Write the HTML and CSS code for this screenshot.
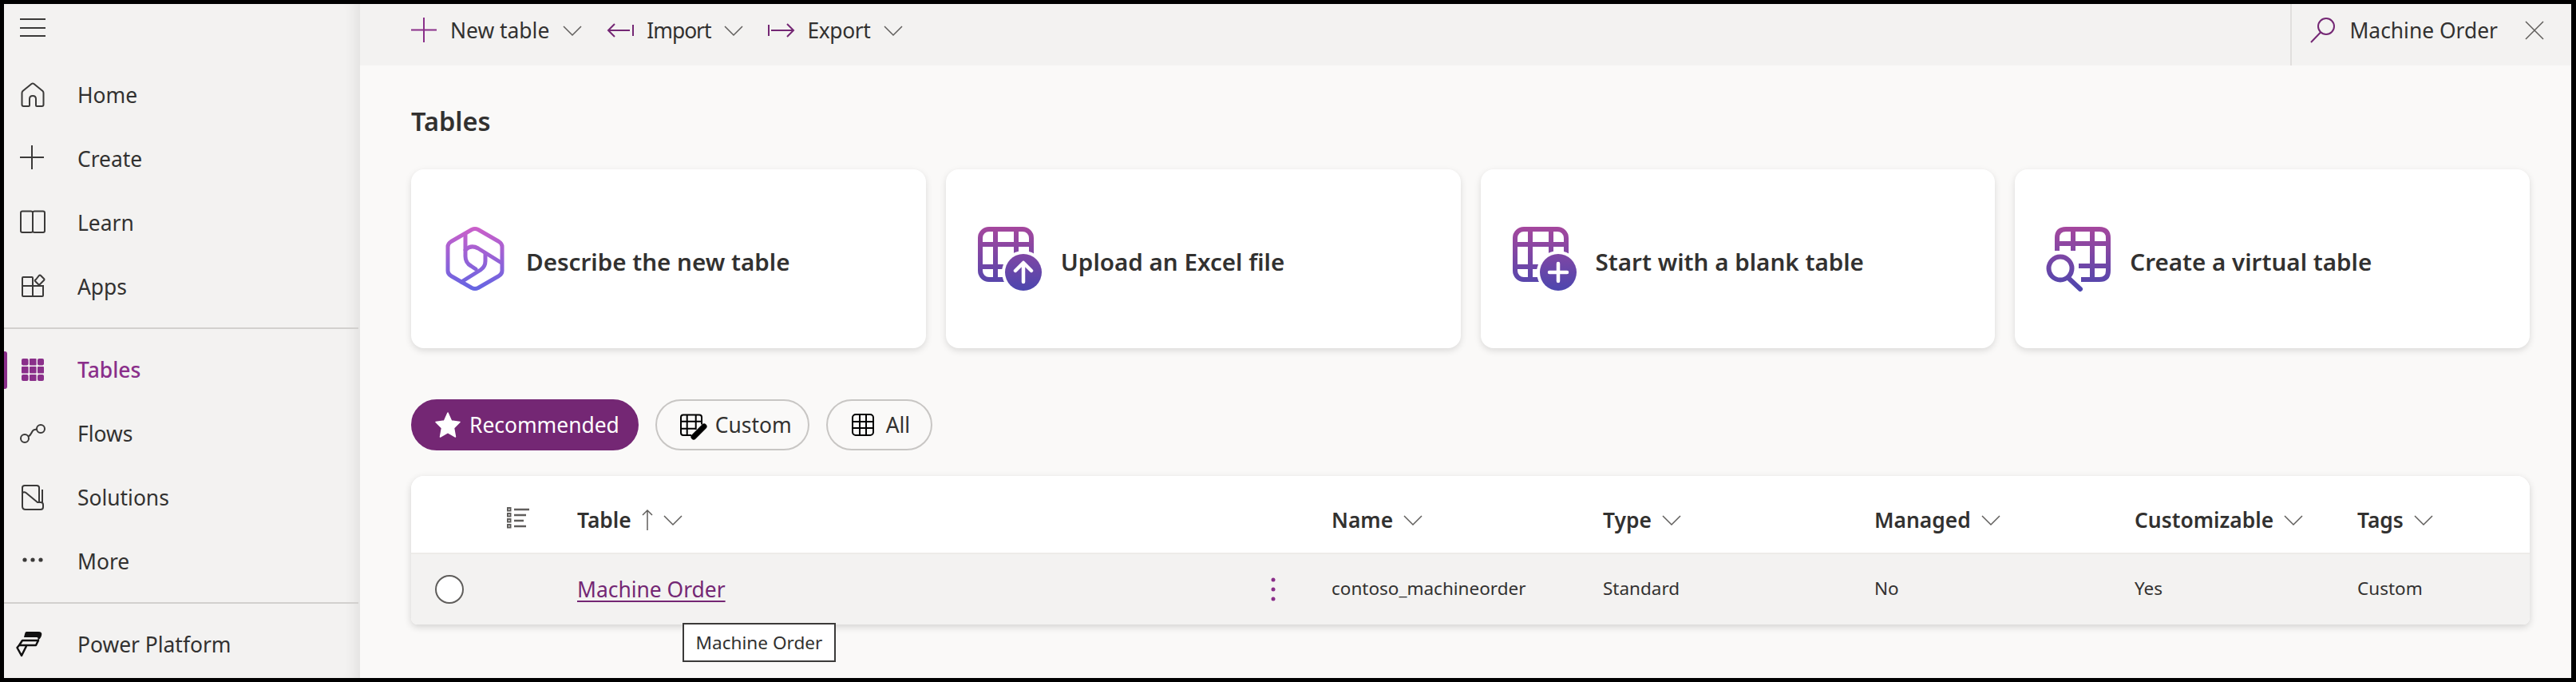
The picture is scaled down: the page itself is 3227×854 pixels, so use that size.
FILE: index.html
```html
<!DOCTYPE html>
<html lang="en">
<head>
<meta charset="utf-8">
<title>Tables</title>
<link rel="stylesheet" href="styles.css">
</head>
<body>
<div class="app">
  <aside class="sidebar">
    <div class="hamburger"><svg class="ico" width="32" height="24" viewBox="0 0 32 24"><path d="M0 1H32M0 12H32M0 22H32"/></svg></div>
    <nav class="nav">
      <a class="nav-item"><svg class="ico" width="32" height="32" viewBox="0 0 32 32"><path d="M2.5 13.5Q2.5 12 3.5 11L14.5 2Q16 1 17.5 2L28.5 11Q29.5 12 29.5 13.5V28Q29.5 30 27.5 30H21Q20 30 20 29V21Q20 17 16 17T12 21V29Q12 30 11 30H4.5Q2.5 30 2.5 28Z"/></svg><span>Home</span></a>
      <a class="nav-item"><svg class="ico" width="32" height="32" viewBox="0 0 32 32"><path d="M15 -1V29M0 14H30"/></svg><span>Create</span></a>
      <a class="nav-item"><svg class="ico" width="32" height="32" viewBox="0 0 32 32"><path d="M3 1.5H14Q15.5 1.5 16 3Q16.5 1.5 18 1.5H29Q31 1.5 31 3.5V26Q31 28 29 28H18Q16.5 28 16 26.5Q15.5 28 14 28H3Q1 28 1 26V3.5Q1 1.5 3 1.5ZM16 3V26.5"/></svg><span>Learn</span></a>
      <a class="nav-item"><svg class="ico" width="32" height="32" viewBox="0 0 32 32"><path d="M16 15H4Q3 15 3 14M3 14V5Q3 4 4 4H15Q16 4 16 5V28M3 14V27Q3 28 4 28H28Q29 28 29 27V15H16M20 7L24 2Q25 1 26 2L30 6Q31 7 30 8L25 13Q24 14 23 13L19 9Q18 8 20 7Z"/></svg><span>Apps</span></a>
    </nav>
    <div class="nav-rule"></div>
    <nav class="nav">
      <a class="nav-item is-active"><svg class="ico-fill" width="32" height="32" viewBox="0 0 32 32"><rect x="2" y="2" width="8.6" height="8.6" rx="2"/><rect x="12" y="2" width="8.6" height="8.6" rx="1"/><rect x="22" y="2" width="8" height="8.6" rx="2"/><rect x="2" y="12" width="8.6" height="8.6" rx="1"/><rect x="12" y="12" width="8.6" height="8.6" rx="1"/><rect x="22" y="12" width="8" height="8.6" rx="1"/><rect x="2" y="22" width="8.6" height="8" rx="2"/><rect x="12" y="22" width="8.6" height="8" rx="1"/><rect x="22" y="22" width="8" height="8" rx="2"/></svg><span>Tables</span></a>
      <a class="nav-item"><svg class="ico" width="32" height="32" viewBox="0 0 32 32"><circle cx="6" cy="22" r="5"/><circle cx="26" cy="10" r="5"/><path d="M10.5 19.5C14 18 14.5 14 16 12.5C17 11 19 11 21 10.5"/></svg><span>Flows</span></a>
      <a class="nav-item"><svg class="ico" width="32" height="32" viewBox="0 0 32 32"><path d="M3 12V3.5Q3 1 6 1H21Q24 1 24 3.5V22M3 12V27Q3 31 7 31H26Q29 31 29 28V25Q29 22 26 22H22L7.5 10Q6 9 4 9.5L3 10M28 6V22"/></svg><span>Solutions</span></a>
      <a class="nav-item"><svg class="ico-dots" width="32" height="32" viewBox="0 0 32 32"><circle cx="6" cy="14" r="2.6"/><circle cx="16" cy="14" r="2.6"/><circle cx="26" cy="14" r="2.6"/></svg><span>More</span></a>
    </nav>
    <div class="nav-rule nav-rule-low"></div>
    <a class="nav-item"><svg class="ico-logo" width="32" height="32" viewBox="0 0 32 32"><path class="logo-solid" d="M12 0H27Q32.500 0 31 5Q29.500 9.500 26 11Q27.500 7 25 7H9L10 3Q10.500 0 12 0Z"/><path class="logo-line" d="M7 11H27L24 17H3ZM3 17L0.500 20L6 30L12 18"/></svg><span>Power Platform</span></a>
  </aside>

  <main class="main">
    <header class="toolbar">
      <button class="tb-btn tb-new"><svg class="ico-brand" width="32" height="32" viewBox="0 0 32 32"><path d="M16 0V31M0 15.500H32"/></svg><span>New table</span><svg class="chev" width="24" height="13" viewBox="0 0 24 13"><path d="M1 1L12 12L23 1"/></svg></button>
      <button class="tb-btn tb-import"><svg class="ico-brand2" width="33" height="32" viewBox="0 0 33 32"><path d="M32 9V23M1 16H28M9 8L1 16L9 24"/></svg><span>Import</span><svg class="chev" width="24" height="13" viewBox="0 0 24 13"><path d="M1 1L12 12L23 1"/></svg></button>
      <button class="tb-btn tb-export"><svg class="ico-brand2" width="33" height="32" viewBox="0 0 33 32"><path d="M1 9V23M4 16H32M24 8L32 16L24 24"/></svg><span>Export</span><svg class="chev" width="24" height="13" viewBox="0 0 24 13"><path d="M1 1L12 12L23 1"/></svg></button>
      <div class="tb-search">
        <svg class="ico-brand2" width="32" height="32" viewBox="0 0 32 32"><circle cx="20" cy="11" r="10"/><path d="M13 18.500L1 31"/></svg>
        <span>Machine Order</span>
        <svg class="ico-close" width="24" height="24" viewBox="0 0 24 24"><path d="M1 1L23 23M23 1L1 23"/></svg>
      </div>
    </header>

    <section class="content">
      <h1 class="title">Tables</h1>

      <div class="cards">
        <a class="card">
          <svg class="card-ico" width="80" height="80" viewBox="0 0 80 80"><defs><linearGradient id="gCop" gradientUnits="userSpaceOnUse" x1="0" y1="0" x2="0" y2="80"><stop offset="0" stop-color="#cc5fc9"/><stop offset="1" stop-color="#6365e3"/></linearGradient></defs><g fill="none" stroke="url(#gCop)" stroke-width="5" stroke-linejoin="round" stroke-linecap="round"><path d="M44 3.500Q40 1.500 36 3.500L10 18.500Q6 21 6 25V55Q6 59 10 61.500L36 76.500Q40 78.500 44 76.500L70 61.500Q74 59 74 55V25Q74 21 70 18.500Z"/><path d="M28 10V37Q28 45 35 49L41 53"/><path d="M28 29Q35 22 44 27L73 45"/><path d="M53 33V43Q53 50 47 54L23 69"/></g></svg>
          <span>Describe the new table</span>
        </a>
        <a class="card">
          <svg class="card-ico" width="80" height="80" viewBox="0 0 80 80"><defs><linearGradient id="gUp" gradientUnits="userSpaceOnUse" x1="0" y1="0" x2="0" y2="80"><stop offset="0" stop-color="#a5479d"/><stop offset="1" stop-color="#4c46ae"/></linearGradient></defs><g fill="none" stroke="url(#gUp)" stroke-width="6"><rect x="3" y="3" width="64" height="63" rx="11"/><path d="M22 3V66M48 3V66M3 22H67M3 50H67"/></g><circle cx="57" cy="57" r="27" fill="#fff"/><circle cx="57" cy="57" r="23" fill="url(#gUp)"/><path class="glyph" d="M57 69V46M47 55L57 45L67 55"/></svg>
          <span>Upload an Excel file</span>
        </a>
        <a class="card">
          <svg class="card-ico" width="80" height="80" viewBox="0 0 80 80"><defs><linearGradient id="gAdd" gradientUnits="userSpaceOnUse" x1="0" y1="0" x2="0" y2="80"><stop offset="0" stop-color="#a5479d"/><stop offset="1" stop-color="#4c46ae"/></linearGradient></defs><g fill="none" stroke="url(#gAdd)" stroke-width="6"><rect x="3" y="3" width="64" height="63" rx="11"/><path d="M22 3V66M48 3V66M3 22H67M3 50H67"/></g><circle cx="57" cy="57" r="27" fill="#fff"/><circle cx="57" cy="57" r="23" fill="url(#gAdd)"/><path class="glyph" d="M57 46V68M46 57H68"/></svg>
          <span>Start with a blank table</span>
        </a>
        <a class="card">
          <svg class="card-ico" width="80" height="80" viewBox="0 0 80 80"><defs><linearGradient id="gVir" gradientUnits="userSpaceOnUse" x1="0" y1="0" x2="0" y2="80"><stop offset="0" stop-color="#a5479d"/><stop offset="1" stop-color="#4c46ae"/></linearGradient></defs><g fill="none" stroke="url(#gVir)" stroke-width="6"><path d="M13 30V14Q13 3 24 3H66Q77 3 77 14V55Q77 66 66 66H43"/><path d="M33 3V30M57 3V66M13 21H77M40 49H77"/><circle cx="17" cy="52" r="14.500"/><path d="M27 64L42 78" stroke-linecap="round"/></g></svg>
          <span>Create a virtual table</span>
        </a>
      </div>

      <div class="pills">
        <button class="pill pill-on pill-rec"><svg width="32" height="32" viewBox="0 0 32 32"><path class="star" d="M16 1L20.500 11L31 12.500L23.500 20L25.500 31L16 25.500L6.500 31L8.500 20L1 12.500L11.500 11Z"/></svg><span>Recommended</span></button>
        <button class="pill pill-cus"><svg class="ico-black" width="34" height="32" viewBox="0 0 34 32"><path d="M15 29H5Q2 29 2 26V6.500Q2 3.500 5 3.500H25Q28 3.500 28 6.500V15.500M9.700 3.500V29M20.700 3.500V22M2 11.700H28M2 20.700H21"/><path class="pen" d="M31 18L18 31"/></svg><span>Custom</span></button>
        <button class="pill pill-all"><svg class="ico-black" width="28" height="28" viewBox="0 0 28 28"><rect x="1" y="1" width="26" height="26" rx="4"/><path d="M10 1V27M18 1V27M1 10H27M1 18H27"/></svg><span>All</span></button>
      </div>

      <div class="table-card">
        <div class="thead">
          <div class="cell"></div>
          <div class="cell"><svg class="ico-list" width="28" height="28" viewBox="0 0 28 28"><rect x="1" y="-1" width="3.500" height="3.500"/><rect x="1" y="6" width="3.500" height="3.500"/><rect x="1" y="13" width="3.500" height="3.500"/><rect x="1" y="20" width="3.500" height="3.500"/><path d="M9 1H28M9 8H24M9 15H21M9 22H24"/></svg></div>
          <div class="cell th"><span>Table</span><svg class="sort" width="14" height="26" viewBox="0 0 14 26"><path d="M7 26V1M1 7L7 1L13 7"/></svg><svg class="chev" width="24" height="13" viewBox="0 0 24 13"><path d="M1 1L12 12L23 1"/></svg></div>
          <div class="cell th"><span>Name</span><svg class="chev" width="24" height="13" viewBox="0 0 24 13"><path d="M1 1L12 12L23 1"/></svg></div>
          <div class="cell th"><span>Type</span><svg class="chev" width="24" height="13" viewBox="0 0 24 13"><path d="M1 1L12 12L23 1"/></svg></div>
          <div class="cell th"><span>Managed</span><svg class="chev" width="24" height="13" viewBox="0 0 24 13"><path d="M1 1L12 12L23 1"/></svg></div>
          <div class="cell th"><span>Customizable</span><svg class="chev" width="24" height="13" viewBox="0 0 24 13"><path d="M1 1L12 12L23 1"/></svg></div>
          <div class="cell th"><span>Tags</span><svg class="chev" width="24" height="13" viewBox="0 0 24 13"><path d="M1 1L12 12L23 1"/></svg></div>
        </div>
        <div class="trow">
          <div class="cell cell-radio"><span class="radio"></span></div>
          <div class="cell"></div>
          <div class="cell cell-link"><a class="link">Machine Order</a><svg class="kebab" width="6" height="30" viewBox="0 0 6 30"><circle cx="3" cy="3" r="2.500"/><circle cx="3" cy="15" r="2.500"/><circle cx="3" cy="27" r="2.500"/></svg></div>
          <div class="cell td">contoso_machineorder</div>
          <div class="cell td">Standard</div>
          <div class="cell td">No</div>
          <div class="cell td">Yes</div>
          <div class="cell td">Custom</div>
        </div>
        <div class="tooltip">Machine Order</div>
      </div>
    </section>
  </main>
</div>
</body>
</html>
```

FILE: styles.css
```css
* { box-sizing: border-box; }
html, body { margin: 0; padding: 0; }
body { font-family: "Noto Sans", "Open Sans", sans-serif; color: #323130; background: #000; }
svg { display: block; flex: none; overflow: visible; }
.app { width: 3227px; height: 854px; display: flex; border: solid #000; border-width: 5px 6px 5px 5px; background: #faf9f8; overflow: hidden; }

/* sidebar */
.sidebar { width: 446px; flex: none; background: #f3f2f1; box-shadow: inset -16px 0 16px -10px rgba(0,0,0,.07); display: flex; flex-direction: column; }
.hamburger { height: 74px; padding: 18px 0 0 20px; }
.nav { display: flex; flex-direction: column; }
.nav-item { height: 80px; display: flex; align-items: center; gap: 40px; padding-left: 20px; font-size: 26.4px; position: relative; }
.nav-rule { height: 2px; width: 444px; background: #d2d0ce; margin: 11px 0 11px; flex: none; }
.nav-rule-low { margin: 11px 0 11px; }
.ico path, .ico circle { fill: none; stroke: #3b3a39; stroke-width: 2; }
.ico-fill { fill: #8a2f8a; }
.ico-dots { fill: #3b3a39; }
.ico-logo { margin-left: -4px; margin-right: 4px; }
.logo-solid { fill: #111; }
.logo-line { fill: none; stroke: #111; stroke-width: 2.500; stroke-linejoin: round; }
.is-active { color: #8a2f8a; font-weight: 500; }
.is-active::before { content: ""; position: absolute; left: 0; top: 17px; width: 4px; height: 47px; background: #8a2f8a; border-radius: 0 3px 3px 0; }

/* toolbar */
.toolbar { height: 77px; flex: none; background: #f3f2f1; display: flex; align-items: center; padding-left: 64px; font-size: 26.4px; }
.tb-btn { display: flex; align-items: center; gap: 17px; border: 0; background: none; padding: 0; margin: 0 32px 11px 0; font: inherit; color: inherit; }
.tb-import { gap: 16px; margin-right: 31px; }
.tb-import > span { letter-spacing: -1px; }
.tb-export > span { letter-spacing: -.4px; }
.ico-brand path { fill: none; stroke: #8a2f8a; stroke-width: 2; }
.ico-brand2 path, .ico-brand2 circle { fill: none; stroke: #742774; stroke-width: 2; }
.chev path { fill: none; stroke: #605e5c; stroke-width: 1.500; }
.tb-search { margin-left: auto; height: 77px; border-left: 2px solid #e1dfdd; display: flex; align-items: center; padding: 0 34px 11px 23px; gap: 17px; }
.tb-search > span { margin-right: 17px; }
.ico-close path { fill: none; stroke: #605e5c; stroke-width: 1.500; }

/* content */
.main { flex: 1; min-width: 0; display: flex; flex-direction: column; }
.content { padding: 50px 52px 0 64px; position: relative; }
.title { margin: 0 0 40px; height: 40px; line-height: 40px; font-size: 32.500px; font-weight: 600; color: #323130; }
.cards { display: grid; grid-template-columns: repeat(4, 1fr); gap: 25px; }
.card { height: 224px; background: #fff; border-radius: 16px; box-shadow: 0 3px 8px rgba(0,0,0,.13); display: flex; align-items: center; gap: 24px; padding-left: 40px; font-size: 29.600px; font-weight: 600; }
.card > span { margin-top: 6px; }
.glyph { fill: none; stroke: #fff; stroke-width: 4.500; stroke-linecap: round; stroke-linejoin: round; }

/* pills */
.pills { display: flex; gap: 21px; margin: 64px 0 32px; }
.pill { height: 64px; border-radius: 32px; border: 2px solid #c8c6c4; background: #faf9f8; display: flex; align-items: center; font: inherit; font-size: 26.4px; color: #323130; }
.pill-on { background: #742774; border-color: #742774; color: #fff; }
.pill-rec { padding: 0 22px 0 28px; gap: 11px; }
.pill-cus { padding: 0 20px 0 28px; gap: 11px; }
.pill-all { padding: 0 26px 0 30px; gap: 15px; }
.star { fill: #fff; stroke: #fff; stroke-width: 1.500; stroke-linejoin: round; }
.ico-black path, .ico-black rect { fill: none; stroke: #000; stroke-width: 2; }
.ico-black .pen { stroke-width: 7; stroke-linecap: round; }

/* table */
.table-card { position: relative; border-radius: 16px 16px 8px 8px; box-shadow: 0 3px 10px rgba(0,0,0,.16); background: #fff; }
.thead, .trow { display: grid; grid-template-columns: 120px 88px 945px 340px 340px 326px 279px 216px; }
.thead { height: 98px; padding-top: 14px; background: #fff; border-radius: 16px 16px 0 0; border-bottom: 2px solid #edebe9; }
.trow { height: 88px; background: #f3f2f1; border-radius: 0 0 8px 8px; }
.cell { display: flex; align-items: center; min-width: 0; }
.th { font-size: 26.4px; font-weight: 600; gap: 13px; }
.td { font-size: 22.500px; padding-bottom: 4px; }
.cell-radio { padding-left: 30px; }
.radio { width: 36px; height: 36px; border-radius: 50%; border: 2px solid #605e5c; background: #fff; }
.ico-list path { fill: none; stroke: #605e5c; stroke-width: 2.500; }
.ico-list rect { fill: #fff; stroke: #605e5c; stroke-width: 2; }
.sort path { fill: none; stroke: #605e5c; stroke-width: 1.500; }
.cell-link { justify-content: space-between; padding-right: 70px; font-size: 26.4px; }
.link { color: #742774; text-decoration: underline; text-underline-offset: 4px; text-decoration-thickness: 2px; }
.kebab { fill: #8a2f8a; }
.tooltip { position: absolute; left: 340px; top: 184px; width: 192px; height: 49px; background: #fff; border: 2px solid #3b3a39; display: flex; align-items: center; justify-content: center; font-size: 22.600px; }
```
